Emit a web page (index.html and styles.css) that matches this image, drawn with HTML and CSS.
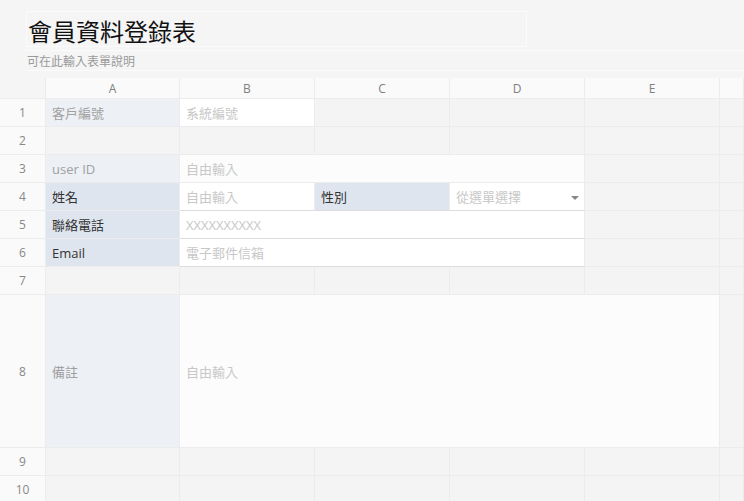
FILE: index.html
```html
<!DOCTYPE html>
<html lang="zh-Hant">
<head>
<meta charset="utf-8">
<link rel="stylesheet" href="styles.css">
</head>
<body>
<div class="head">
  <div class="title-box"><h1 class="title">會員資料登錄表</h1></div>
  <div class="desc-box">可在此輸入表單說明</div>
</div>
<div class="sheet">
  <div class="ch corner"></div>
  <div class="ch">A</div>
  <div class="ch">B</div>
  <div class="ch">C</div>
  <div class="ch">D</div>
  <div class="ch">E</div>
  <div class="ch"></div>

  <div class="rh">1</div>
  <div class="c lab-l muted">客戶編號</div>
  <div class="c in ph">系統編號</div>
  <div class="c"></div><div class="c"></div><div class="c"></div><div class="c"></div>

  <div class="rh">2</div>
  <div class="c"></div><div class="c"></div><div class="c"></div><div class="c"></div><div class="c"></div><div class="c"></div>

  <div class="rh">3</div>
  <div class="c lab-l muted">user ID</div>
  <div class="c soft ph span3">自由輸入</div>
  <div class="c"></div><div class="c"></div>

  <div class="rh">4</div>
  <div class="c lab">姓名</div>
  <div class="c in ph line">自由輸入</div>
  <div class="c lab line">性別</div>
  <div class="c in ph line select">從選單選擇<span class="caret"></span></div>
  <div class="c"></div><div class="c"></div>

  <div class="rh">5</div>
  <div class="c lab">聯絡電話</div>
  <div class="c in ph line span3">XXXXXXXXXX</div>
  <div class="c"></div><div class="c"></div>

  <div class="rh">6</div>
  <div class="c lab">Email</div>
  <div class="c in ph line span3">電子郵件信箱</div>
  <div class="c"></div><div class="c"></div>

  <div class="rh">7</div>
  <div class="c"></div><div class="c"></div><div class="c"></div><div class="c"></div><div class="c"></div><div class="c"></div>

  <div class="rh">8</div>
  <div class="c lab-l muted">備註</div>
  <div class="c soft ph span4">自由輸入</div>
  <div class="c"></div>

  <div class="rh">9</div>
  <div class="c"></div><div class="c"></div><div class="c"></div><div class="c"></div><div class="c"></div><div class="c"></div>

  <div class="rh">10</div>
  <div class="c"></div><div class="c"></div><div class="c"></div><div class="c"></div><div class="c"></div><div class="c"></div>
</div>
</body>
</html>
```
FILE: styles.css
```css
html, body {
  margin: 0;
  padding: 0;
  background: #f5f5f5;
  font-family: "Open Sans", "Noto Sans CJK TC", sans-serif;
  overflow: hidden;
}
.head {
  height: 78px;
  padding: 11px 0 0 26px;
  box-sizing: border-box;
}
.title-box {
  width: 501px;
  height: 36px;
  box-sizing: border-box;
  border: 1px solid #fbfbfb;
  display: flex;
  align-items: center;
  padding-top: 3px;
}
.title {
  margin: 0 0 0 1px;
  font-size: 24px;
  font-weight: 400;
  color: #111;
  line-height: 1;
  font-family: "Noto Sans CJK TC", sans-serif;
}
.desc-box {
  margin-top: 3px;
  height: 21px;
  box-sizing: border-box;
  border-top: 1px solid #fbfbfb;
  border-bottom: 1px solid #fbfbfb;
  font-size: 12px;
  color: #9a9a9a;
  line-height: 21px;
  padding-left: 1px;
}
.sheet {
  display: grid;
  grid-template-columns: 46px 134px 135px 135px 135px 135px 1fr;
  grid-template-rows: 21px repeat(7, 28px) 153px 28px 28px;
}
.ch {
  background: #fafafa;
  border-right: 1px solid #ececec;
  border-bottom: 1px solid #ececec;
  font-size: 12px;
  color: #808080;
  display: flex;
  align-items: center;
  justify-content: center;
  padding-top: 1px;
}
.ch.corner { background: #f5f5f5; }
.rh {
  background: #fafafa;
  border-right: 1px solid #ececec;
  border-bottom: 1px solid #ececec;
  font-size: 12px;
  color: #888;
  display: flex;
  align-items: center;
  justify-content: center;
}
.c {
  background: #f4f4f4;
  border-right: 1px solid #ececec;
  border-bottom: 1px solid #ececec;
  font-size: 13px;
  display: flex;
  align-items: center;
  padding-left: 6px;
  min-width: 0;
  white-space: nowrap;
  overflow: hidden;
}
.lab-l { background: #edf0f5; }
.lab { background: #dfe5ee; color: #333; }
.muted { color: #a0a0a0; }
.in { background: #ffffff; }
.soft { background: #fcfcfc; }
.ph { color: #c8c8c8; }
.line { border-bottom: 1px solid #dcdcdc; }
.span3 { grid-column: span 3; }
.span4 { grid-column: span 4; }
.select { position: relative; }
.caret {
  position: absolute;
  right: 5px;
  top: 50%;
  margin-top: -1px;
  width: 0;
  height: 0;
  border-left: 4px solid transparent;
  border-right: 4px solid transparent;
  border-top: 4px solid #888;
}
```
